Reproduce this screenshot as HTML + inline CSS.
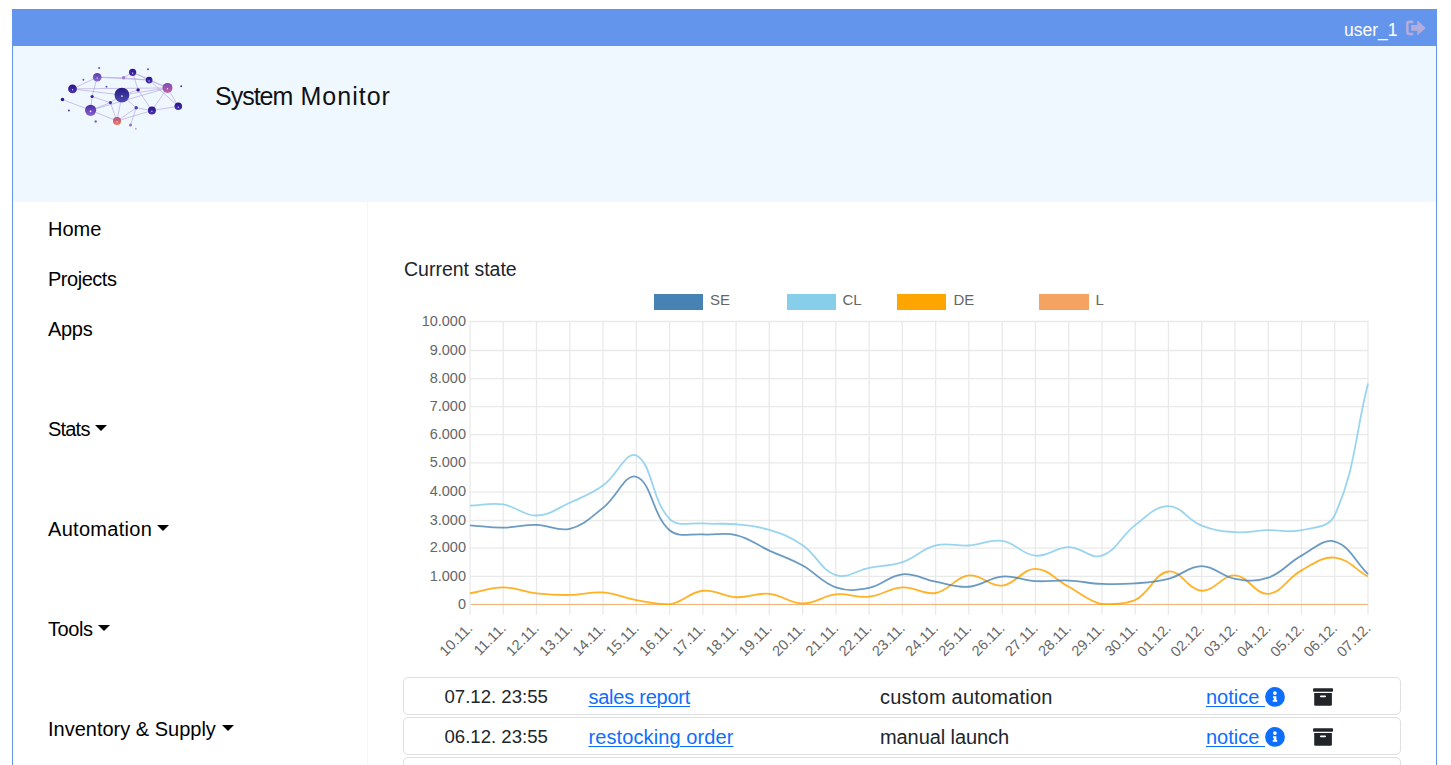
<!DOCTYPE html>
<html><head><meta charset="utf-8">
<style>
html,body{margin:0;padding:0;background:#fff;width:1451px;height:765px;overflow:hidden;position:relative;font-family:"Liberation Sans",sans-serif;color:#212529}
.abs{position:absolute;white-space:nowrap}
#topbar{position:absolute;left:12px;top:9px;width:1425px;height:37px;background:#6495ED}
#frame{position:absolute;left:12px;top:46px;width:1423px;height:730px;border-left:1px solid #6495ED;border-right:1px solid #6495ED}
#header{position:absolute;left:13px;top:46px;width:1423px;height:156px;background:#F0F8FF}
#sep{position:absolute;left:367px;top:202px;width:1px;height:600px;background:#F0F8FF}
.user{left:1344px;top:19px;font-size:17.5px;color:#fff;line-height:22px}
.title{left:215px;top:81px;font-size:25px;line-height:30px;color:#111}
.nav{left:48px;font-size:20px;line-height:24px;color:#000}
.caret{display:inline-block;width:0;height:0;border-left:6px solid transparent;border-right:6px solid transparent;border-top:6px solid #000;vertical-align:middle;margin-left:5px;position:relative;top:-3px}
.cs{left:404px;top:257px;font-size:19.5px;line-height:24px}
svg.chart{position:absolute;left:0;top:0}
.yl{font-family:"Liberation Sans",sans-serif;font-size:14.5px;fill:#666}
.xl{font-family:"Liberation Sans",sans-serif;font-size:14.6px;fill:#666}
.row{position:absolute;left:403px;width:996px;height:36px;border:1px solid #dfdfdf;border-radius:5px;background:#fff}
.cell{position:absolute;top:7px;font-size:20px;line-height:24px;white-space:nowrap}
.leg{font-size:15px;line-height:18px;color:#666}
.info{position:absolute;top:9px}
.arch{position:absolute;top:10px}
.dt{font-size:18.6px;top:7px}
.lnk{color:#0d6efd;text-decoration:underline;text-decoration-thickness:1px;text-underline-offset:2px}
</style></head><body>
<div id="topbar"></div>
<div id="frame"></div>
<div id="header"></div>
<div id="sep"></div>
<div class="abs user">user_1</div>
<svg class="abs" style="left:1400px;top:15px" width="32" height="25" viewBox="0 0 32 25">
  <path d="M13.2 6.85 H9.3 Q7.35 6.85 7.35 8.8 V17.3 Q7.35 19 9.3 19 H13.2" stroke="#b3acdc" stroke-width="2.6" fill="none" stroke-linecap="butt"/>
  <path d="M11.1 10.1 H17.3 V6.3 Q17.3 5.4 18.1 6 L25.7 12.9 L18.1 19.8 Q17.3 20.4 17.3 19.5 V15.7 H11.1 Z" fill="#b3acdc"/>
</svg>
<svg class="abs" style="left:0;top:0" width="200" height="140" viewBox="0 0 200 140">
<defs>
<linearGradient id="gA" x1="0" y1="0" x2="0" y2="1"><stop offset="0" stop-color="#2a1488"/><stop offset="1" stop-color="#4a32b0"/></linearGradient>
<linearGradient id="gB" x1="0" y1="0" x2="0" y2="1"><stop offset="0" stop-color="#5a3aa8"/><stop offset="1" stop-color="#8a6ad0"/></linearGradient>
<linearGradient id="gC" x1="0" y1="0" x2="0" y2="1"><stop offset="0" stop-color="#2a1488"/><stop offset="1" stop-color="#4a32b0"/></linearGradient>
<linearGradient id="gD" x1="0" y1="0" x2="0" y2="1"><stop offset="0" stop-color="#2a1488"/><stop offset="1" stop-color="#4a32b0"/></linearGradient>
<linearGradient id="gE" x1="0" y1="0" x2="0" y2="1"><stop offset="0" stop-color="#7a4ab0"/><stop offset="1" stop-color="#c463a8"/></linearGradient>
<linearGradient id="gF" x1="0" y1="0" x2="0" y2="1"><stop offset="0" stop-color="#2a1488"/><stop offset="1" stop-color="#4a32b0"/></linearGradient>
<linearGradient id="gG" x1="0" y1="0" x2="0" y2="1"><stop offset="0" stop-color="#281a80"/><stop offset="1" stop-color="#4c4cb4"/></linearGradient>
<linearGradient id="gH" x1="0" y1="0" x2="0" y2="1"><stop offset="0" stop-color="#4a2aa0"/><stop offset="1" stop-color="#8a62d2"/></linearGradient>
<linearGradient id="gI" x1="0" y1="0" x2="0" y2="1"><stop offset="0" stop-color="#b0508a"/><stop offset="1" stop-color="#f07c5c"/></linearGradient>
<linearGradient id="gJ" x1="0" y1="0" x2="0" y2="1"><stop offset="0" stop-color="#2a1488"/><stop offset="1" stop-color="#4a32b0"/></linearGradient>
</defs>
<g stroke="#a58fd8" stroke-width="0.7" opacity="0.75">
<line x1="72.5" y1="88.9" x2="97.2" y2="77.2"/>
<line x1="72.5" y1="88.9" x2="121.9" y2="95.1"/>
<line x1="72.5" y1="88.9" x2="167.5" y2="87.9"/>
<line x1="97.2" y1="77.2" x2="92.1" y2="96.5"/>
<line x1="92.1" y1="96.5" x2="90.6" y2="110.3"/>
<line x1="97.2" y1="77.2" x2="123.6" y2="77.8"/>
<line x1="97.2" y1="77.2" x2="149.1" y2="80.1"/>
<line x1="123.6" y1="77.8" x2="149.1" y2="80.1"/>
<line x1="132.6" y1="72.3" x2="149.1" y2="80.1"/>
<line x1="132.6" y1="72.3" x2="138.1" y2="89.9"/>
<line x1="132.6" y1="72.3" x2="123.6" y2="77.8"/>
<line x1="132.6" y1="72.3" x2="167.5" y2="87.9"/>
<line x1="149.1" y1="80.1" x2="167.5" y2="87.9"/>
<line x1="149.1" y1="80.1" x2="178.3" y2="106.3"/>
<line x1="167.5" y1="87.9" x2="178.3" y2="106.3"/>
<line x1="167.5" y1="87.9" x2="151.9" y2="110.5"/>
<line x1="167.5" y1="87.9" x2="121.9" y2="95.1"/>
<line x1="167.5" y1="87.9" x2="90.6" y2="110.3"/>
<line x1="121.9" y1="95.1" x2="138.1" y2="89.9"/>
<line x1="121.9" y1="95.1" x2="136.2" y2="107.8"/>
<line x1="121.9" y1="95.1" x2="117.0" y2="121.0"/>
<line x1="90.6" y1="110.3" x2="110.4" y2="102.6"/>
<line x1="110.4" y1="102.6" x2="121.9" y2="95.1"/>
<line x1="90.6" y1="110.3" x2="117.0" y2="121.0"/>
<line x1="110.4" y1="102.6" x2="117.0" y2="121.0"/>
<line x1="92.1" y1="96.5" x2="110.4" y2="102.6"/>
<line x1="136.2" y1="107.8" x2="117.0" y2="121.0"/>
<line x1="136.2" y1="107.8" x2="130.5" y2="125.0"/>
<line x1="136.2" y1="107.8" x2="151.9" y2="110.5"/>
<line x1="117.0" y1="121.0" x2="151.9" y2="110.5"/>
<line x1="151.9" y1="110.5" x2="178.3" y2="106.3"/>
<line x1="138.1" y1="89.9" x2="151.9" y2="110.5"/>
<line x1="62.5" y1="99.5" x2="90.6" y2="110.3"/>
</g>
<circle cx="72.5" cy="88.9" r="4.4" fill="url(#gA)"/>
<circle cx="97.2" cy="77.2" r="4.3" fill="url(#gB)"/>
<circle cx="132.6" cy="72.3" r="3.6" fill="url(#gC)"/>
<circle cx="149.1" cy="80.1" r="3.4" fill="url(#gD)"/>
<circle cx="167.5" cy="87.9" r="5.0" fill="url(#gE)"/>
<circle cx="178.3" cy="106.3" r="3.8" fill="url(#gF)"/>
<circle cx="121.9" cy="95.1" r="7.4" fill="url(#gG)"/>
<circle cx="90.6" cy="110.3" r="5.6" fill="url(#gH)"/>
<circle cx="117.0" cy="121.0" r="4.0" fill="url(#gI)"/>
<circle cx="151.9" cy="110.5" r="4.0" fill="url(#gJ)"/>
<circle cx="123.6" cy="77.8" r="1.7" fill="#a07ad8"/>
<circle cx="138.1" cy="89.9" r="1.7" fill="#2a1488"/>
<circle cx="92.1" cy="96.5" r="1.6" fill="#3a2098"/>
<circle cx="110.4" cy="102.6" r="1.6" fill="#4a2aa8"/>
<circle cx="136.2" cy="107.8" r="1.7" fill="#4a40a8"/>
<circle cx="62.5" cy="99.5" r="1.7" fill="#2a1488"/>
<circle cx="130.5" cy="125.0" r="1.5" fill="#9a6ad0"/>
<circle cx="135.8" cy="128.8" r="1.0" fill="#c0a0e0"/>
<circle cx="95.7" cy="121.5" r="1.2" fill="#8a5ad0"/>
<circle cx="68.9" cy="110.5" r="1.0" fill="#5a3ab0"/>
<circle cx="83.4" cy="79.8" r="1.0" fill="#6a4ac0"/>
<circle cx="106.5" cy="86.7" r="1.0" fill="#6a4ac0"/>
<circle cx="99.1" cy="68.0" r="1.0" fill="#6a4ac0"/>
<circle cx="148.0" cy="69.3" r="1.0" fill="#6a4ac0"/>
<circle cx="181.2" cy="86.2" r="1.0" fill="#5a3ab0"/>
<rect x="72.0" y="89.2" width="1.1" height="1.1" fill="#fff" opacity="0.9"/>
<rect x="96.7" y="77.5" width="1.1" height="1.1" fill="#fff" opacity="0.9"/>
<rect x="132.0" y="72.6" width="1.1" height="1.1" fill="#fff" opacity="0.9"/>
<rect x="148.5" y="80.4" width="1.1" height="1.1" fill="#fff" opacity="0.9"/>
<rect x="166.9" y="88.2" width="1.1" height="1.1" fill="#fff" opacity="0.9"/>
<rect x="177.8" y="106.6" width="1.1" height="1.1" fill="#fff" opacity="0.9"/>
<rect x="121.2" y="95.4" width="1.5" height="1.5" fill="#fff" opacity="0.9"/>
<rect x="89.8" y="110.6" width="1.5" height="1.5" fill="#fff" opacity="0.9"/>
<rect x="116.5" y="121.3" width="1.1" height="1.1" fill="#fff" opacity="0.9"/>
<rect x="151.3" y="110.8" width="1.1" height="1.1" fill="#fff" opacity="0.9"/>
</svg>
<div class="abs title"><span style="letter-spacing:-1px">System</span></div><div class="abs title" style="left:300.5px"><span style="letter-spacing:1px">Monitor</span></div>
<div class="abs nav" style="top:217px">Home</div>
<div class="abs nav" style="top:267px;letter-spacing:-0.47px">Projects</div>
<div class="abs nav" style="top:317px;letter-spacing:-0.3px">Apps</div>
<div class="abs nav" style="top:417px"><span style="letter-spacing:-0.8px">Stats</span><span class="caret"></span></div>
<div class="abs nav" style="top:517px"><span style="letter-spacing:0.3px">Automation</span><span class="caret"></span></div>
<div class="abs nav" style="top:617px"><span style="letter-spacing:-0.4px">Tools</span><span class="caret"></span></div>
<div class="abs nav" style="top:717px">Inventory &amp; Supply<span class="caret" style="margin-left:6px"></span></div>
<div class="abs cs">Current state</div>
<div class="abs" style="left:653.5px;top:294px;width:49.6px;height:15.8px;background:#4682B4"></div>
<div class="abs leg" style="left:710.0px;top:290.7px">SE</div>
<div class="abs" style="left:786.5px;top:294px;width:49.6px;height:15.8px;background:#87CEEB"></div>
<div class="abs leg" style="left:842.5px;top:290.7px">CL</div>
<div class="abs" style="left:896.5px;top:294px;width:49.6px;height:15.8px;background:#FFA500"></div>
<div class="abs leg" style="left:953.5px;top:290.7px">DE</div>
<div class="abs" style="left:1039.0px;top:294px;width:49.6px;height:15.8px;background:#F4A460"></div>
<div class="abs leg" style="left:1095.5px;top:290.7px">L</div>
<svg class="chart" width="1451" height="765" viewBox="0 0 1451 765">
<path d="M470.00 321.00 V614.80 M503.26 321.00 V614.80 M536.52 321.00 V614.80 M569.78 321.00 V614.80 M603.04 321.00 V614.80 M636.30 321.00 V614.80 M669.56 321.00 V614.80 M702.81 321.00 V614.80 M736.07 321.00 V614.80 M769.33 321.00 V614.80 M802.59 321.00 V614.80 M835.85 321.00 V614.80 M869.11 321.00 V614.80 M902.37 321.00 V614.80 M935.63 321.00 V614.80 M968.89 321.00 V614.80 M1002.15 321.00 V614.80 M1035.41 321.00 V614.80 M1068.67 321.00 V614.80 M1101.93 321.00 V614.80 M1135.19 321.00 V614.80 M1168.44 321.00 V614.80 M1201.70 321.00 V614.80 M1234.96 321.00 V614.80 M1268.22 321.00 V614.80 M1301.48 321.00 V614.80 M1334.74 321.00 V614.80 M1368.00 321.00 V614.80 M469.30 604.40 H1368.70 M469.30 576.30 H1368.70 M469.30 548.10 H1368.70 M469.30 520.50 H1368.70 M469.30 492.20 H1368.70 M469.30 462.90 H1368.70 M469.30 434.60 H1368.70 M469.30 406.60 H1368.70 M469.30 378.70 H1368.70 M469.30 350.50 H1368.70 M469.30 321.50 H1368.70" stroke="rgba(0,0,0,0.085)" stroke-width="1.3" fill="none"/>
<text x="466.0" y="608.6" class="yl" text-anchor="end">0</text>
<text x="466.0" y="580.5" class="yl" text-anchor="end">1.000</text>
<text x="466.0" y="552.3" class="yl" text-anchor="end">2.000</text>
<text x="466.0" y="524.7" class="yl" text-anchor="end">3.000</text>
<text x="466.0" y="496.4" class="yl" text-anchor="end">4.000</text>
<text x="466.0" y="467.1" class="yl" text-anchor="end">5.000</text>
<text x="466.0" y="438.8" class="yl" text-anchor="end">6.000</text>
<text x="466.0" y="410.8" class="yl" text-anchor="end">7.000</text>
<text x="466.0" y="382.9" class="yl" text-anchor="end">8.000</text>
<text x="466.0" y="354.7" class="yl" text-anchor="end">9.000</text>
<text x="466.0" y="325.7" class="yl" text-anchor="end">10.000</text>
<text x="473.5" y="629.1" class="xl" text-anchor="end" transform="rotate(-45 473.5 629.1)">10.11.</text>
<text x="506.8" y="629.1" class="xl" text-anchor="end" transform="rotate(-45 506.8 629.1)">11.11.</text>
<text x="540.0" y="629.1" class="xl" text-anchor="end" transform="rotate(-45 540.0 629.1)">12.11.</text>
<text x="573.3" y="629.1" class="xl" text-anchor="end" transform="rotate(-45 573.3 629.1)">13.11.</text>
<text x="606.5" y="629.1" class="xl" text-anchor="end" transform="rotate(-45 606.5 629.1)">14.11.</text>
<text x="639.8" y="629.1" class="xl" text-anchor="end" transform="rotate(-45 639.8 629.1)">15.11.</text>
<text x="673.1" y="629.1" class="xl" text-anchor="end" transform="rotate(-45 673.1 629.1)">16.11.</text>
<text x="706.3" y="629.1" class="xl" text-anchor="end" transform="rotate(-45 706.3 629.1)">17.11.</text>
<text x="739.6" y="629.1" class="xl" text-anchor="end" transform="rotate(-45 739.6 629.1)">18.11.</text>
<text x="772.8" y="629.1" class="xl" text-anchor="end" transform="rotate(-45 772.8 629.1)">19.11.</text>
<text x="806.1" y="629.1" class="xl" text-anchor="end" transform="rotate(-45 806.1 629.1)">20.11.</text>
<text x="839.4" y="629.1" class="xl" text-anchor="end" transform="rotate(-45 839.4 629.1)">21.11.</text>
<text x="872.6" y="629.1" class="xl" text-anchor="end" transform="rotate(-45 872.6 629.1)">22.11.</text>
<text x="905.9" y="629.1" class="xl" text-anchor="end" transform="rotate(-45 905.9 629.1)">23.11.</text>
<text x="939.1" y="629.1" class="xl" text-anchor="end" transform="rotate(-45 939.1 629.1)">24.11.</text>
<text x="972.4" y="629.1" class="xl" text-anchor="end" transform="rotate(-45 972.4 629.1)">25.11.</text>
<text x="1005.6" y="629.1" class="xl" text-anchor="end" transform="rotate(-45 1005.6 629.1)">26.11.</text>
<text x="1038.9" y="629.1" class="xl" text-anchor="end" transform="rotate(-45 1038.9 629.1)">27.11.</text>
<text x="1072.2" y="629.1" class="xl" text-anchor="end" transform="rotate(-45 1072.2 629.1)">28.11.</text>
<text x="1105.4" y="629.1" class="xl" text-anchor="end" transform="rotate(-45 1105.4 629.1)">29.11.</text>
<text x="1138.7" y="629.1" class="xl" text-anchor="end" transform="rotate(-45 1138.7 629.1)">30.11.</text>
<text x="1171.9" y="629.1" class="xl" text-anchor="end" transform="rotate(-45 1171.9 629.1)">01.12.</text>
<text x="1205.2" y="629.1" class="xl" text-anchor="end" transform="rotate(-45 1205.2 629.1)">02.12.</text>
<text x="1238.5" y="629.1" class="xl" text-anchor="end" transform="rotate(-45 1238.5 629.1)">03.12.</text>
<text x="1271.7" y="629.1" class="xl" text-anchor="end" transform="rotate(-45 1271.7 629.1)">04.12.</text>
<text x="1305.0" y="629.1" class="xl" text-anchor="end" transform="rotate(-45 1305.0 629.1)">05.12.</text>
<text x="1338.2" y="629.1" class="xl" text-anchor="end" transform="rotate(-45 1338.2 629.1)">06.12.</text>
<text x="1371.5" y="629.1" class="xl" text-anchor="end" transform="rotate(-45 1371.5 629.1)">07.12.</text>
<defs><clipPath id="ca"><rect x="470.0" y="320.0" width="899.0" height="284.9"/></clipPath></defs>
<g clip-path="url(#ca)" fill="none" stroke-width="1.80">
<rect x="471.0" y="604.0" width="897.0" height="1.0" fill="#F4A460" opacity="0.8"/>
<path d="M470.00 593.27 C483.30 590.90 489.96 587.33 503.26 587.33 C516.56 587.33 523.12 591.73 536.52 593.27 C549.73 594.79 556.48 595.14 569.78 594.97 C583.09 594.80 589.88 591.42 603.04 592.42 C616.49 593.45 622.88 597.66 636.30 600.06 C649.48 602.41 656.71 604.30 669.56 604.30 C683.32 602.37 689.12 592.18 702.81 590.73 C715.73 589.35 722.68 596.60 736.07 597.23 C749.29 597.85 756.26 592.61 769.33 593.84 C782.87 595.10 789.26 603.34 802.59 603.45 C815.87 603.56 822.33 595.78 835.85 594.40 C848.93 593.07 856.04 598.05 869.11 596.66 C882.65 595.23 888.91 588.08 902.37 587.33 C915.52 586.61 923.05 595.23 935.63 592.99 C949.65 590.48 955.07 576.98 968.89 575.45 C981.68 574.04 989.29 586.89 1002.15 585.64 C1015.90 584.29 1022.20 568.73 1035.41 568.95 C1048.80 569.18 1055.32 579.73 1068.67 586.77 C1081.92 593.76 1087.88 601.21 1101.93 604.02 C1114.48 604.30 1123.66 604.30 1135.19 600.06 C1150.27 592.68 1154.26 573.48 1168.44 571.50 C1180.87 569.75 1188.08 589.91 1201.70 590.73 C1214.68 591.50 1221.91 574.84 1234.96 575.45 C1248.52 576.09 1255.38 594.82 1268.22 593.84 C1281.98 592.78 1287.29 578.09 1301.48 570.36 C1313.90 563.61 1321.92 556.44 1334.74 557.64 C1348.52 558.93 1354.70 569.01 1368.00 576.59" stroke="#FFA500" opacity="0.85"/>
<path d="M470.00 505.60 C483.30 505.15 490.30 502.54 503.26 504.47 C516.91 506.50 523.32 515.84 536.52 515.50 C549.93 515.16 556.81 508.62 569.78 502.77 C583.42 496.63 590.92 494.13 603.04 485.52 C617.52 475.24 626.05 450.41 636.30 455.55 C652.66 463.76 651.44 500.41 669.56 518.89 C678.05 527.56 689.45 522.34 702.81 523.42 C716.06 524.49 722.86 522.98 736.07 524.27 C749.47 525.58 756.57 525.91 769.33 529.92 C783.18 534.28 790.63 537.05 802.59 545.19 C817.23 555.15 820.74 570.03 835.85 575.17 C847.35 579.08 855.74 570.43 869.11 567.82 C882.35 565.23 889.72 566.41 902.37 562.16 C916.33 557.48 921.58 549.00 935.63 545.48 C948.19 542.33 955.65 546.38 968.89 545.48 C982.25 544.57 989.38 539.00 1002.15 540.95 C1015.98 543.07 1021.72 554.38 1035.41 555.66 C1048.33 556.87 1055.36 547.17 1068.67 547.17 C1081.97 547.17 1090.44 559.47 1101.93 555.66 C1117.04 550.65 1120.78 535.83 1135.19 525.12 C1147.39 516.03 1155.19 506.06 1168.44 506.17 C1181.80 506.28 1187.54 520.14 1201.70 525.68 C1214.15 530.55 1221.55 531.27 1234.96 532.19 C1248.15 533.08 1254.91 530.60 1268.22 530.21 C1281.51 529.81 1288.79 533.07 1301.48 530.21 C1315.40 527.07 1329.11 527.64 1334.74 515.22 C1355.72 468.93 1354.70 436.15 1368.00 383.43" stroke="#87CEEB" opacity="0.85"/>
<path d="M470.00 525.40 C483.30 526.30 489.96 527.77 503.26 527.66 C516.57 527.55 523.24 524.61 536.52 524.83 C549.85 525.06 557.53 531.92 569.78 528.79 C584.14 525.13 590.71 517.51 603.04 507.87 C617.32 496.69 625.13 473.01 636.30 476.76 C651.74 481.94 652.19 515.15 669.56 530.21 C678.80 538.23 689.46 533.48 702.81 534.45 C716.07 535.41 723.43 531.95 736.07 535.01 C750.03 538.40 755.99 544.44 769.33 550.57 C782.59 556.66 789.86 558.52 802.59 565.56 C816.47 573.22 821.37 582.47 835.85 587.33 C847.97 591.40 856.32 590.40 869.11 587.90 C882.93 585.20 888.71 575.60 902.37 574.32 C915.32 573.11 922.24 579.17 935.63 581.68 C948.85 584.15 955.81 587.77 968.89 586.77 C982.41 585.73 988.61 577.74 1002.15 576.59 C1015.21 575.47 1022.04 580.31 1035.41 581.11 C1048.65 581.90 1055.40 579.98 1068.67 580.54 C1082.00 581.11 1088.59 583.37 1101.93 583.94 C1115.20 584.50 1121.94 584.39 1135.19 583.37 C1148.55 582.35 1155.53 582.20 1168.44 578.85 C1182.14 575.30 1188.40 566.12 1201.70 566.12 C1215.01 566.12 1221.21 576.45 1234.96 578.85 C1247.82 581.09 1256.12 581.93 1268.22 577.72 C1282.73 572.66 1287.52 563.26 1301.48 555.66 C1314.13 548.78 1323.11 538.30 1334.74 541.52 C1349.71 545.66 1354.70 561.03 1368.00 574.04" stroke="#4682B4" opacity="0.80"/>
</g>
</svg>
<div class="row" style="top:677px">
  <div class="cell dt" style="left:40.5px">07.12. 23:55</div>
  <div class="cell lnk" style="left:184.5px;letter-spacing:-0.25px">sales report</div>
  <div class="cell" style="left:476px;letter-spacing:0.22px">custom automation</div>
  <div class="cell" style="left:802px"><span class="lnk">notice&nbsp;</span></div>
  <svg class="info" style="left:861px" width="20" height="20" viewBox="0 0 20 20"><circle cx="10" cy="9.9" r="9.9" fill="#0d6efd"/><circle cx="9.9" cy="6.1" r="1.85" fill="#fff"/><path d="M8 9.3 H11.4 V12.9 H12.2 V14.7 H7.8 V12.9 H8.8 V10.9 H8 Z" fill="#fff"/></svg>
  <svg class="arch" style="left:909px" width="21" height="19" viewBox="0 0 21 19"><rect x="0.1" y="0.3" width="19.9" height="3.5" rx="0.8" fill="#212529"/><path d="M1.2 5.1 H18.9 V16.6 Q18.9 17.8 17.7 17.8 H2.4 Q1.2 17.8 1.2 16.6 Z" fill="#212529"/><rect x="7" y="7.6" width="6" height="1.6" rx="0.8" fill="#fff"/></svg>
</div>
<div class="row" style="top:717px">
  <div class="cell dt" style="left:40.5px">06.12. 23:55</div>
  <div class="cell lnk" style="left:184.5px;letter-spacing:0.1px">restocking order</div>
  <div class="cell" style="left:476px;letter-spacing:-0.08px">manual launch</div>
  <div class="cell" style="left:802px"><span class="lnk">notice&nbsp;</span></div>
  <svg class="info" style="left:861px" width="20" height="20" viewBox="0 0 20 20"><circle cx="10" cy="9.9" r="9.9" fill="#0d6efd"/><circle cx="9.9" cy="6.1" r="1.85" fill="#fff"/><path d="M8 9.3 H11.4 V12.9 H12.2 V14.7 H7.8 V12.9 H8.8 V10.9 H8 Z" fill="#fff"/></svg>
  <svg class="arch" style="left:909px" width="21" height="19" viewBox="0 0 21 19"><rect x="0.1" y="0.3" width="19.9" height="3.5" rx="0.8" fill="#212529"/><path d="M1.2 5.1 H18.9 V16.6 Q18.9 17.8 17.7 17.8 H2.4 Q1.2 17.8 1.2 16.6 Z" fill="#212529"/><rect x="7" y="7.6" width="6" height="1.6" rx="0.8" fill="#fff"/></svg>
</div>
<div class="row" style="top:757px"></div>
</body></html>
